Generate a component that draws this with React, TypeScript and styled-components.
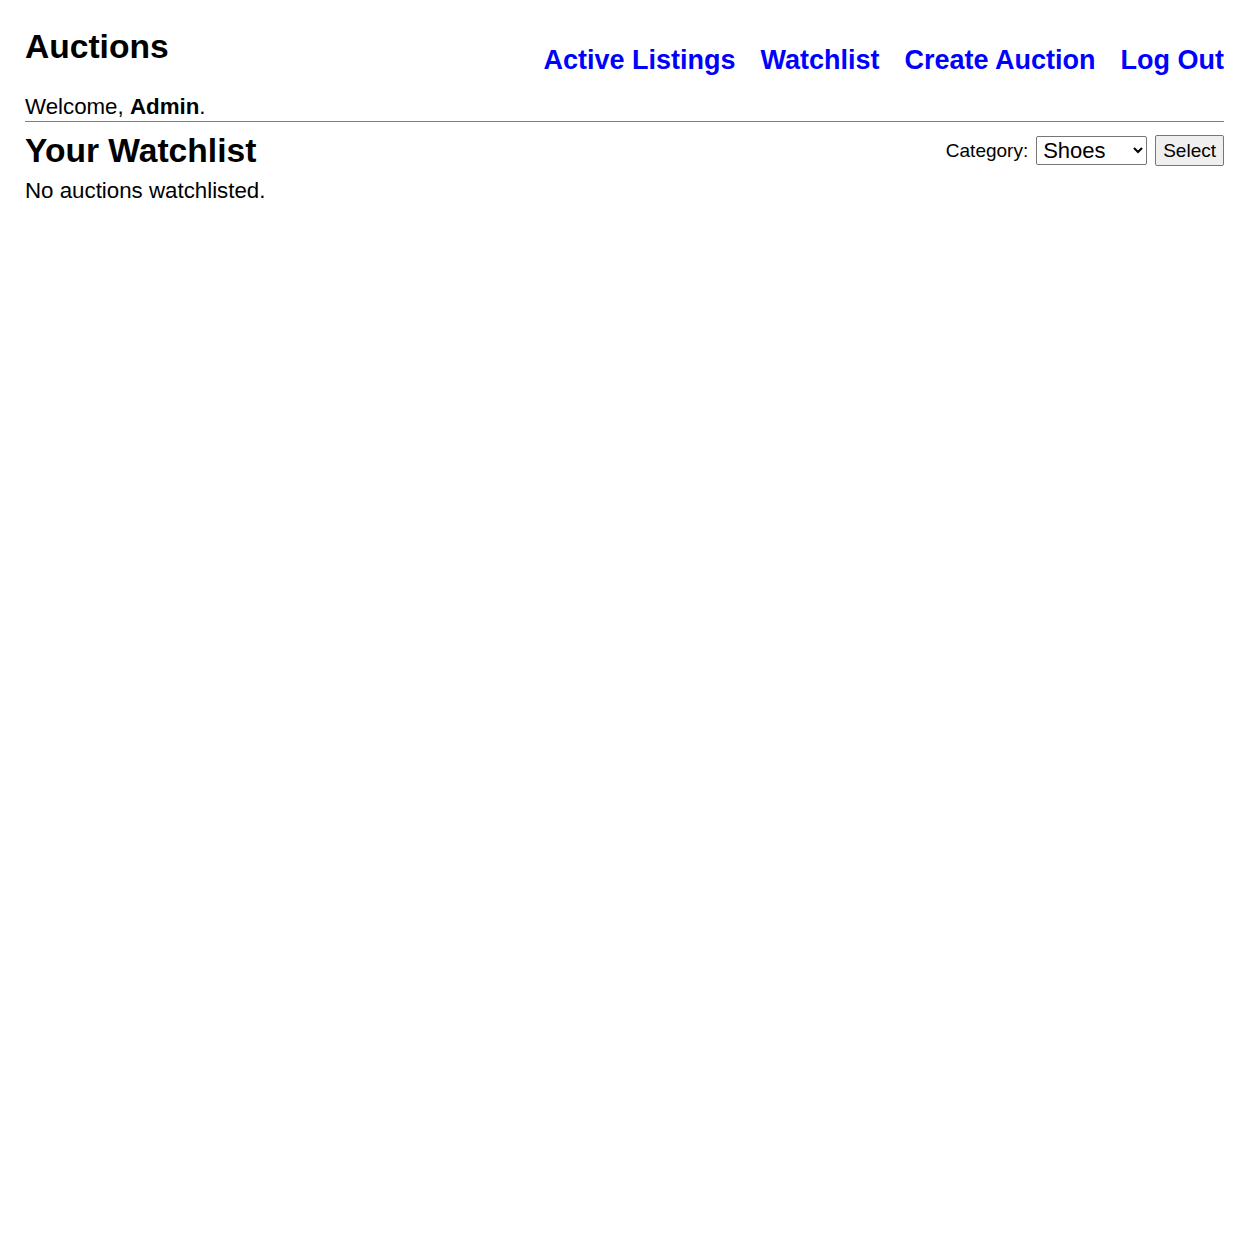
import React from "react";
import styled, { createGlobalStyle } from "styled-components";

const GlobalStyle = createGlobalStyle`
  html, body { margin: 0; padding: 0; background: #ffffff; }
  body { font-family: "Liberation Sans", Arial, sans-serif; color: #000; }
`;

const Page = styled.div`
  padding: 0 25px;
`;

const Header = styled.header`
  display: flex;
  justify-content: space-between;
  align-items: flex-start;
`;

const Brand = styled.h1`
  margin: 28px 0 0;
  font-size: 33.6px;
  line-height: 38px;
  font-weight: bold;
`;

const Nav = styled.nav`
  display: flex;
  gap: 25px;
  margin-top: 42px;
`;

const NavLink = styled.a`
  font-size: 27px;
  line-height: 36px;
  font-weight: bold;
  color: #0000ff;
  text-decoration: none;
`;

const Welcome = styled.div`
  font-size: 22.3px;
  line-height: 25px;
  margin-top: 16px;
`;

const Rule = styled.hr`
  border: 0;
  border-top: 1px solid #808080;
  margin: 2px 0 0;
`;

const TitleRow = styled.div`
  display: flex;
  justify-content: space-between;
  align-items: flex-start;
`;

const Title = styled.h2`
  margin: 10px 0 0;
  font-size: 33.6px;
  line-height: 38px;
  font-weight: bold;
`;

const FilterForm = styled.form`
  display: flex;
  align-items: center;
  margin-top: 13px;
`;

const Label = styled.label`
  font-size: 19px;
  margin-right: 8px;
`;

const Select = styled.select`
  font-family: "Liberation Sans", Arial, sans-serif;
  font-size: 22px;
  width: 111px;
  height: 29px;
  border: 1px solid #767676;
  border-radius: 2px;
  background: #fff;
  color: #000;
  padding: 0 2px;
  margin-right: 8px;
`;

const Button = styled.button`
  font-family: "Liberation Sans", Arial, sans-serif;
  font-size: 19px;
  height: 31px;
  padding: 0 7px;
  border: 1px solid #767676;
  border-radius: 2px;
  background: #efefef;
  color: #000;
`;

const Empty = styled.p`
  margin: 8px 0 0;
  font-size: 22.3px;
  line-height: 25px;
`;

export default function App() {
  return (
    <>
      <GlobalStyle />
      <Page>
        <Header>
          <Brand>Auctions</Brand>
          <Nav>
            <NavLink href="#">Active Listings</NavLink>
            <NavLink href="#">Watchlist</NavLink>
            <NavLink href="#">Create Auction</NavLink>
            <NavLink href="#">Log Out</NavLink>
          </Nav>
        </Header>
        <Welcome>
          Welcome, <strong>Admin</strong>.
        </Welcome>
        <Rule />
        <TitleRow>
          <Title>Your Watchlist</Title>
          <FilterForm onSubmit={(e) => e.preventDefault()}>
            <Label htmlFor="cat">Category:</Label>
            <Select id="cat" defaultValue="Shoes">
              <option>Shoes</option>
              <option>Electronics</option>
              <option>Fashion</option>
              <option>Home</option>
              <option>Toys</option>
            </Select>
            <Button type="submit">Select</Button>
          </FilterForm>
        </TitleRow>
        <Empty>No auctions watchlisted.</Empty>
      </Page>
    </>
  );
}
